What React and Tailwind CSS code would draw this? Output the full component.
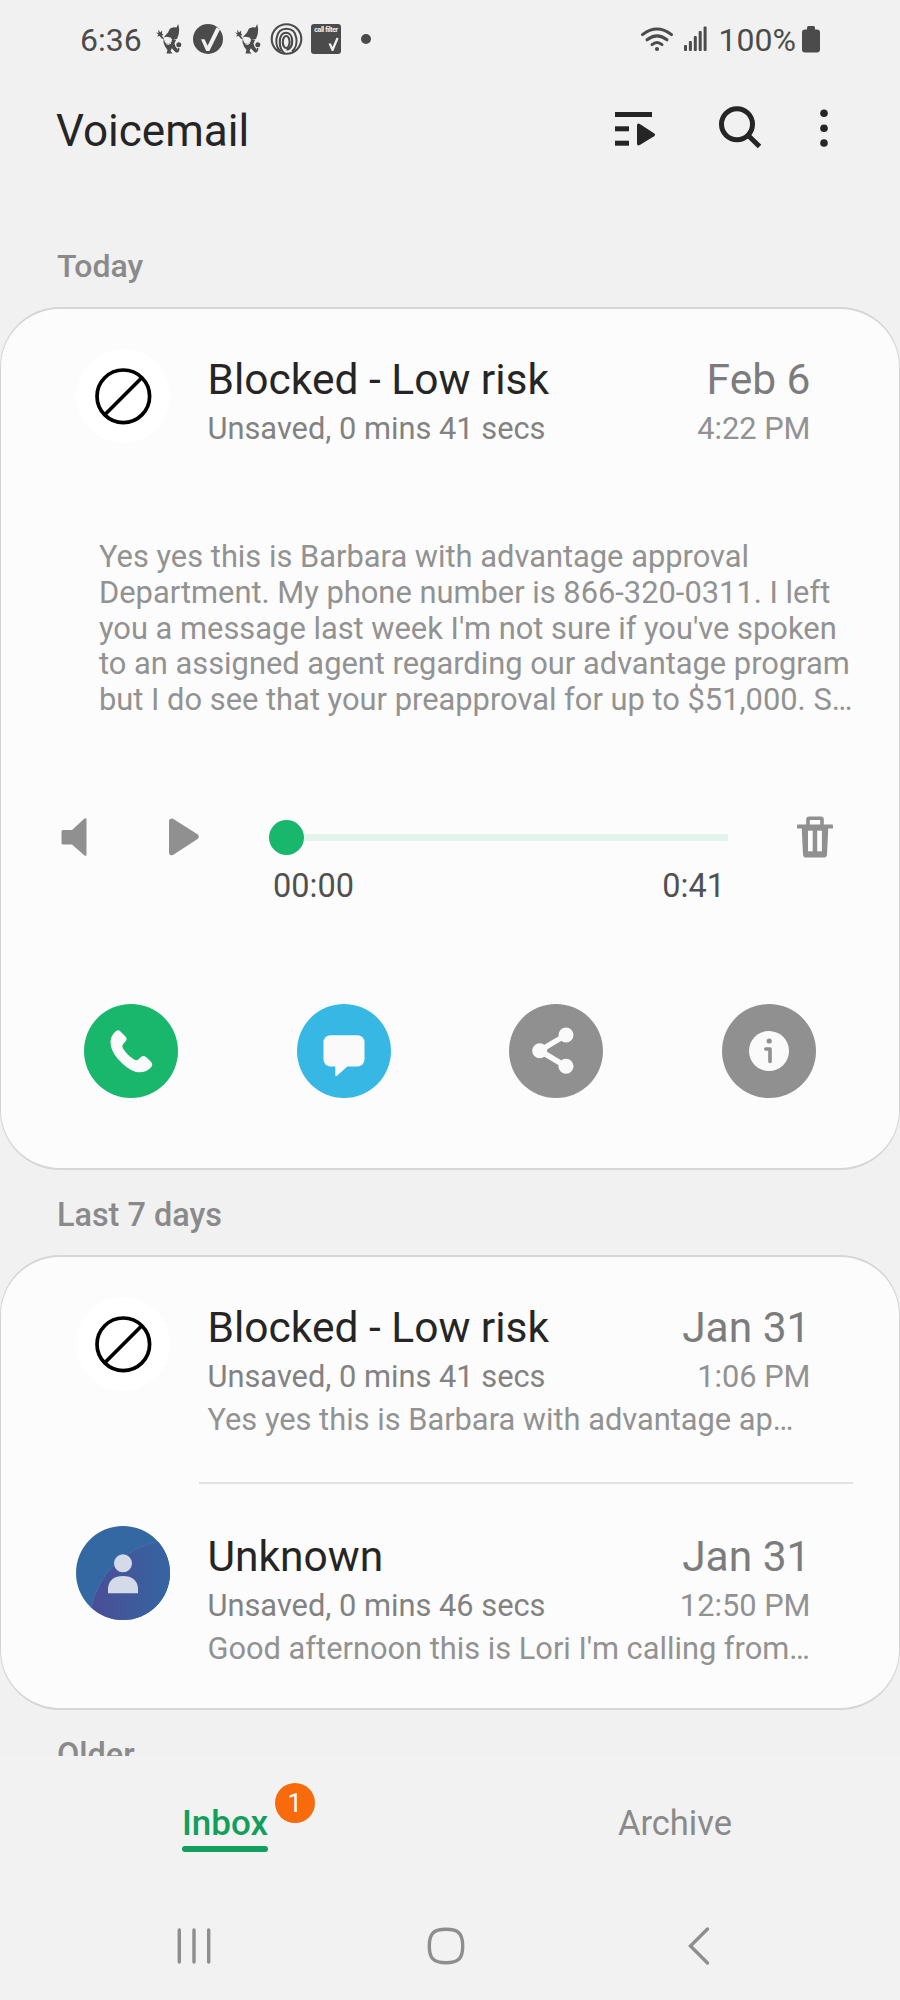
import React from "react";

const transcript = [
  "Yes yes this is Barbara with advantage approval",
  "Department. My phone number is 866-320-0311. I left",
  "you a message last week I'm not sure if you've spoken",
  "to an assigned agent regarding our advantage program",
  "but I do see that your preapproval for up to $51,000. S…",
];

function JesterIcon() {
  return (
    <svg width="26" height="30" viewBox="0 0 26 30" fill="#4b4b4b">
      <path d="M0 8L2.5 9.2L2.2 5.5L4.2 8.5L6.2 6.5L6 9.5L7.5 11L5.6 11.6L8 15L6 14.8L3.6 12L1 12.6L2.4 10.8Z" />
      <path d="M7.5 13.5L12 8.5L14 4.5L17.5 3.2L20.5 3.4L22.2 0L23.2 5L22.8 10L21 15L16.5 16L14.5 13.6L10.5 12.8Z" />
      <path d="M7.6 14L9 18.5L12.5 20L15.5 18L16 15.5L20 16L18.5 19.5L19.5 22.5L22 26L20.5 28.5L17.5 26L15.8 24.2L14.5 27L16.5 29.5H10.5L11.5 26L9 22.5L7.5 18.5Z" />
      <path d="M18.5 25.5C20 29 23 28.5 22.5 24" fill="none" stroke="#4b4b4b" strokeWidth="1.6" />
      <circle cx="22.8" cy="20.8" r="2.5" />
      <circle cx="11" cy="16.2" r="1.1" fill="#f1f1f1" />
      <circle cx="13.8" cy="16.2" r="1" fill="#f1f1f1" />
      <path d="M10 19.6Q12.5 21.6 15 19.2" fill="none" stroke="#f1f1f1" strokeWidth="1" />
    </svg>
  );
}

function StatusBar() {
  return (
    <div className="flex h-[78px] items-center justify-between pr-[80px] pl-[80px] text-[32px] text-[#4b4b4b]">
      <div className="flex items-center">
        <span className="w-[76px] pt-0.5">6:36</span>
        <JesterIcon />
        <svg className="ml-[11px]" width="30" height="30" viewBox="0 0 30 30">
          <circle cx="15" cy="15" r="15" fill="#4b4b4b" />
          <path d="M8 15.2H11.6L14.6 21.8L23.4 3.4L27 5.6L16.4 27H13.2Z" fill="#f1f1f1" />
        </svg>
        <span className="w-[12px]" />
        <JesterIcon />
        <svg className="ml-[9px]" width="33" height="33" viewBox="0 0 33 33" fill="none" stroke="#4b4b4b" strokeWidth="2.1">
          <circle cx="16.5" cy="16" r="14.8" />
          <path d="M10.5 28.5C4 23 4.500 5.800 16.500 5.800C28.500 5.800 29 23 22 28.500" />
          <path d="M15 31C8 26 7.800 9.800 16 9.800C24.200 9.800 24.200 26.500 16.500 26.500" />
          <ellipse cx="16.200" cy="19" rx="3.400" ry="6" />
        </svg>
        <div className="ml-[8px] h-[30px] w-[30px] overflow-hidden rounded-[3px] bg-[#4b4b4b] pt-[3px] text-center">
          <div className="text-[7px] leading-[7px] font-bold tracking-[-0.4px] whitespace-nowrap text-[#f1f1f1]">call filter</div>
          <svg width="30" height="18" viewBox="0 0 30 18">
            <path d="M17.500 9.500H20L21.500 13L25.600 3.500L27.600 4.500L22.300 17H20.700Z" fill="#f1f1f1" />
          </svg>
        </div>
        <span className="ml-[20px] h-[10px] w-[10px] rounded-full bg-[#4b4b4b]" />
      </div>

      <div className="flex items-center">
        <svg width="34" height="26" viewBox="0 0 34 26" fill="none" stroke="#4b4b4b" strokeWidth="3" strokeLinecap="round">
          <path d="M2.500 8.600Q17 -2.600 31.500 8.600" />
          <path d="M7 13.800Q17 6 27 13.800" />
          <path d="M12 18.600Q17 14.400 22 18.600" />
          <circle cx="17" cy="23" r="2.100" fill="#4b4b4b" stroke="none" />
        </svg>
        <svg className="ml-[10px]" width="24" height="26" viewBox="0 0 24 26" fill="#4b4b4b">
          <rect x="0" y="19" width="3" height="6" rx="1" />
          <rect x="4.900" y="15" width="3" height="10" rx="1" />
          <rect x="9.800" y="10" width="3" height="15" rx="1" />
          <rect x="14.700" y="5" width="3" height="20" rx="1" />
          <rect x="19.600" y="0.500" width="3" height="24.500" rx="1" />
        </svg>
        <span className="ml-[11px] pt-0.5">100%</span>
        <svg className="ml-[6px]" width="18" height="27" viewBox="0 0 18 27" fill="#4b4b4b">
          <rect x="5" y="0" width="8" height="7" rx="1.500" />
          <rect x="0" y="3.500" width="18" height="23" rx="3" />
        </svg>
      </div>
    </div>
  );
}

function Header() {
  return (
    <div className="flex h-[100px] items-center pl-[56px] text-[#252525]">
      <h1 className="w-[559px] pt-[5px] text-[44px] leading-[50px]">Voicemail</h1>
      <svg width="41" height="40" viewBox="0 0 41 40" fill="#252525">
        <rect x="0" y="4" width="37" height="5" />
        <rect x="0" y="18.300" width="14" height="5" />
        <rect x="0" y="32.700" width="14" height="5" />
        <path d="M22 17.500Q22 14.600 24.800 16L39 25.200Q41.200 26.700 39 28.200L24.800 37Q22 38.400 22 35.500Z" />
      </svg>
      <svg className="ml-[62px]" width="44" height="44" viewBox="0 0 44 44" fill="none" stroke="#252525" strokeWidth="5">
        <circle cx="19" cy="18.300" r="15.500" />
        <path d="M30 29.300L41.500 40.500" />
      </svg>
      <svg className="ml-[58px]" width="8" height="40" viewBox="0 0 8 40" fill="#252525">
        <circle cx="4" cy="5.300" r="3.800" />
        <circle cx="4" cy="20.200" r="3.800" />
        <circle cx="4" cy="35" r="3.800" />
      </svg>
    </div>
  );
}

function BlockedAvatar() {
  return (
    <svg className="shrink-0" width="94" height="94" viewBox="0 0 94 94" fill="none" stroke="#000" strokeWidth="3.700">
      <circle cx="47" cy="47" r="47" fill="#fff" stroke="none" />
      <circle cx="47.300" cy="47.300" r="26.300" />
      <path d="M29 65.500L66 28.500" />
    </svg>
  );
}

function ContactAvatar() {
  return (
    <svg className="shrink-0" width="94" height="94" viewBox="0 0 94 94">
      <defs>
        <linearGradient id="swoosh" x1="0" y1="0" x2="1" y2="0">
          <stop offset="0" stopColor="#4b4d96" />
          <stop offset="0.500" stopColor="#3f5a9b" />
          <stop offset="1" stopColor="#3565a2" />
        </linearGradient>
        <clipPath id="round">
          <circle cx="47" cy="47" r="47" />
        </clipPath>
      </defs>
      <g clipPath="url(#round)">
        <rect width="94" height="94" fill="#3468a3" />
        <path d="M15 82Q27 30 82 15L96 15V96H15Z" fill="url(#swoosh)" stroke="#5377ae" strokeWidth="0.600" />
      </g>
      <circle cx="47" cy="37.300" r="9" fill="#d5dae8" />
      <path d="M32 67.300V62Q33.500 50 47 50Q60.500 50 62 62V67.300Z" fill="#d5dae8" />
    </svg>
  );
}

function VoicemailRow({ avatar, name, date, length, time, preview }) {
  return (
    <div className="flex pr-[88.5px] pl-[75px]">
      {avatar}
      <div className="ml-[37.5px] flex-1 pt-1">
        <div className="flex justify-between text-[42.5px] leading-[53px]">
          <span className="text-[#252525]">{name}</span>
          <span className="text-[#7c7c7c]">{date}</span>
        </div>
        <div className="flex justify-between text-[30.8px] leading-[46px]">
          <span className="text-[#828282]">{length}</span>
          <span className="text-[#929292]">{time}</span>
        </div>
        {preview && <p className="text-[30.8px] leading-[39px] whitespace-nowrap text-[#929292]">{preview}</p>}
      </div>
    </div>
  );
}

function Player() {
  return (
    <div>
      <div className="flex h-[48px] items-center pl-[60px]">
        <svg width="26" height="38" viewBox="0 0 26 38" fill="#909090">
          <path d="M2 12H11L23.500 0.600Q25.500 -0.600 25.500 1.500V36.500Q25.500 38.600 23.500 37.400L11 26.500H2Q0.500 26.500 0.500 25V13.500Q0.500 12 2 12Z" />
        </svg>
        <svg className="ml-[82px]" width="30" height="38" viewBox="0 0 30 38" fill="#909090">
          <path d="M0 3Q0.300 -0.600 4 0.800L28.500 16.300Q31.200 18.700 28.500 21L4 37Q0.300 38.300 0 34.800Z" />
        </svg>
        <div className="ml-[70px] flex w-[459px] items-center">
          <span className="h-[35px] w-[35px] rounded-full bg-[#18b76c]" />
          <span className="h-[7px] flex-1 bg-[#e2f4eb]" />
        </div>
        <svg className="ml-[69px]" width="36" height="42" viewBox="0 0 36 42" fill="#909090">
          <path d="M11 9V3.500Q11 2.300 12.200 2.300H23.800Q25 2.300 25 3.500V9" fill="none" stroke="#909090" strokeWidth="3.600" />
          <rect x="0" y="8.500" width="36" height="4" rx="0.800" />
          <path d="M4.700 12H31.300L30 38.500Q29.800 41.600 27 41.600H9Q6.200 41.600 6 38.500Z" />
          <rect x="11" y="14.700" width="4.700" height="20.600" fill="#fcfcfc" />
          <rect x="20.200" y="14.700" width="4.700" height="20.600" fill="#fcfcfc" />
        </svg>
      </div>
      <div className="mt-0.5 flex justify-between pr-[174px] pl-[272px] text-[32.5px] leading-[46px] text-[#505050]">
        <span>00:00</span>
        <span>0:41</span>
      </div>
    </div>
  );
}

function Actions() {
  return (
    <div className="flex justify-between pr-[83px] pl-[83px]">
      {/* Call */}
      <svg width="94" height="94" viewBox="0 0 94 94">
        <circle cx="47" cy="47" r="47" fill="#18b76c" />
        <path
          fill="#fafafa"
          d="M31 28Q33.700 25 36.500 27.500L41.500 32.500Q43.500 35 41.800 37L39 40.200Q37.500 42 39 44.500Q43.500 51.500 50.500 55.800Q52.800 57 54.500 55.300L57.300 52.800Q59.500 51 62 53L67 57.800Q69.300 60.300 67.300 63Q62 69.500 52 68Q43 65.500 33.500 54.500Q26.500 46.500 26.500 38Q26.700 32 31 28Z"
        />
      </svg>
      {/* Message */}
      <svg width="94" height="94" viewBox="0 0 94 94" fill="#fafafa">
        <circle cx="47" cy="47" r="47" fill="#37b8e4" />
        <rect x="26.500" y="31.300" width="41" height="31.200" rx="7" />
        <path d="M38.300 61H52L40 71.800Q38.300 73 38.300 71Z" />
      </svg>
      {/* Share */}
      <svg width="94" height="94" viewBox="0 0 94 94" fill="#fafafa">
        <circle cx="47" cy="47" r="47" fill="#909090" />
        <path d="M57 31L30.700 46.700L57 62.300" fill="none" stroke="#fafafa" strokeWidth="5.500" />
        <circle cx="30.700" cy="46.700" r="7.500" />
        <circle cx="57" cy="31" r="7.500" />
        <circle cx="57" cy="62.300" r="7.500" />
      </svg>
      {/* Details */}
      <svg width="94" height="94" viewBox="0 0 94 94">
        <circle cx="47" cy="47" r="47" fill="#909090" />
        <circle cx="47" cy="47" r="20" fill="#fafafa" />
        <circle cx="47.200" cy="37" r="2.600" fill="#909090" />
        <path d="M43.800 45H48V57.500" fill="none" stroke="#909090" strokeWidth="3.600" strokeLinecap="round" strokeLinejoin="round" />
      </svg>
    </div>
  );
}

function Tabs() {
  return (
    <div className="flex h-[127px] text-[34.5px] leading-[40px]">
      <div className="flex w-1/2 justify-center pt-[47px]">
        <div className="relative">
          <span className="text-[35px] font-medium text-[#129e5d]">Inbox</span>
          <div className="mt-[2px] h-[6px] rounded-full bg-[#129e5d]" />
          <span className="absolute -top-[20px] left-[93px] flex h-[40px] w-[40px] items-center justify-center rounded-full bg-[#f76b0c] text-[26px] text-white">
            1
          </span>
        </div>
      </div>
      <div className="flex w-1/2 justify-center pt-[47px]">
        <span className="text-[#8a8a8a]">Archive</span>
      </div>
    </div>
  );
}

function NavBar() {
  return (
    <div className="flex h-[117px] items-center pt-[8px] pl-[177px]">
      <svg width="34" height="38" viewBox="0 0 34 38" fill="none" stroke="#8e8e8e" strokeWidth="3.400" strokeLinecap="round">
        <path d="M2.300 3V35M17 3V35M31.700 3V35" />
      </svg>
      <svg className="ml-[216px]" width="38" height="38" viewBox="0 0 38 38" fill="none" stroke="#8e8e8e" strokeWidth="3.400">
        <path d="M19 2.300C31.500 2.300 35.700 6.500 35.700 19C35.700 31.500 31.500 35.700 19 35.700C6.500 35.700 2.300 31.500 2.300 19C2.300 6.500 6.500 2.300 19 2.300Z" />
      </svg>
      <svg className="ml-[223px]" width="22" height="40" viewBox="0 0 22 40" fill="none" stroke="#8e8e8e" strokeWidth="3.400" strokeLinecap="round">
        <path d="M19.500 3L2.500 20L19.500 37" />
      </svg>
    </div>
  );
}

function App() {
  return (
    <div className="flex h-[2000px] w-[900px] flex-col overflow-hidden bg-[#f1f1f1] font-['Roboto',sans-serif]">
      <StatusBar />
      <Header />

      {/* List */}
      <div className="h-[1578px] overflow-hidden pt-[65px]">
        <h2 className="h-[64px] pl-[57px] text-[32px] leading-[46px] font-medium text-[#8a8a8a]">Today</h2>

        <section className="h-[863px] rounded-[60px] border-x border-y-2 border-[#d6d6d6] bg-[#fcfcfc] pt-10">
          <VoicemailRow
            avatar={<BlockedAvatar />}
            name="Blocked - Low risk"
            date="Feb 6"
            length="Unsaved, 0 mins 41 secs"
            time="4:22 PM"
          />
          <div className="mt-[87px] h-[179px] pl-[98px] text-[30.85px] leading-[35.75px] whitespace-nowrap text-[#929292]">
            {transcript.map((line) => (
              <p key={line}>{line}</p>
            ))}
          </div>
          <div className="mt-[95px]">
            <Player />
          </div>
          <div className="mt-[95px]">
            <Actions />
          </div>
        </section>

        <h2 className="h-[85px] pt-[22px] pl-[57px] text-[32.4px] leading-[46px] font-medium text-[#8a8a8a]">Last 7 days</h2>

        <section className="h-[455px] rounded-[60px] border-x border-y-2 border-[#d6d6d6] bg-[#fcfcfc]">
          <div className="h-[225px] pt-10">
            <VoicemailRow
              avatar={<BlockedAvatar />}
              name="Blocked - Low risk"
              date="Jan 31"
              length="Unsaved, 0 mins 41 secs"
              time="1:06 PM"
              preview="Yes yes this is Barbara with advantage ap…"
            />
          </div>
          <div className="mr-[46px] ml-[198px] h-0.5 bg-[#e3e3e3]" />
          <div className="pt-[42px]">
            <VoicemailRow
              avatar={<ContactAvatar />}
              name="Unknown"
              date="Jan 31"
              length="Unsaved, 0 mins 46 secs"
              time="12:50 PM"
              preview="Good afternoon this is Lori I'm calling from…"
            />
          </div>
        </section>

        <h2 className="pt-[22px] pl-[57px] text-[32.4px] leading-[46px] font-medium text-[#8a8a8a]">Older</h2>
      </div>

      {/* Bottom bar */}
      <div className="h-[244px] bg-[#f2f2f2]">
        <Tabs />
        <NavBar />
      </div>
    </div>
  );
}

export default App;
